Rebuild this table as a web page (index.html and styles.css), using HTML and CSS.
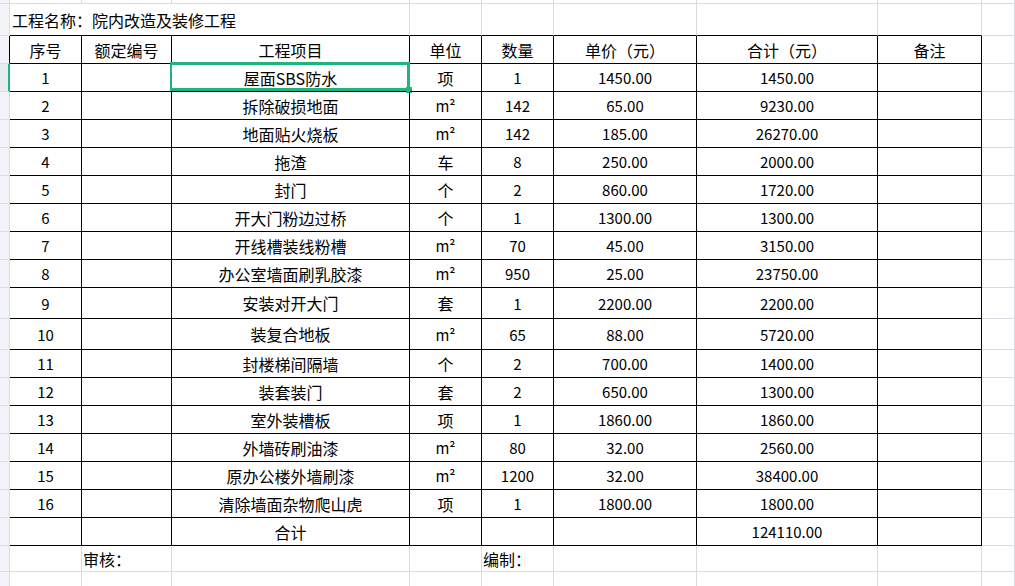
FILE: index.html
```html
<!DOCTYPE html>
<html lang="zh">
<head>
<meta charset="utf-8">
<title>院内改造及装修工程</title>
<link rel="stylesheet" href="styles.css">
</head>
<body>
<div class="sheet">
  <!-- top partial row -->
  <div class="c g"></div><div class="c"></div><div class="c"></div><div class="c"></div><div class="c"></div><div class="c"></div><div class="c"></div><div class="c"></div><div class="c"></div><div class="c"></div>

  <!-- title row -->
  <div class="c g"></div>
  <div class="c above title span3">工程名称：院内改造及装修工程</div>
  <div class="c above"></div><div class="c above"></div><div class="c above"></div><div class="c above"></div><div class="c above"></div>
  <div class="c"></div>

  <!-- header -->
  <div class="c g gh"></div>
  <div class="c t">序号</div><div class="c t">额定编号</div><div class="c t">工程项目</div><div class="c t">单位</div><div class="c t">数量</div><div class="c t">单价（元）</div><div class="c t">合计（元）</div><div class="c t">备注</div>
  <div class="c"></div>

  <div class="c g gsel"></div><div class="c t n">1</div><div class="c t"></div><div class="c t selcell">屋面SBS防水<span class="sel"><span class="handle"></span></span></div><div class="c t">项</div><div class="c t n">1</div><div class="c t n">1450.00</div><div class="c t n">1450.00</div><div class="c t"></div><div class="c"></div>
  <div class="c g"></div><div class="c t n">2</div><div class="c t"></div><div class="c t">拆除破损地面</div><div class="c t u">m²</div><div class="c t n">142</div><div class="c t n">65.00</div><div class="c t n">9230.00</div><div class="c t"></div><div class="c"></div>
  <div class="c g"></div><div class="c t n">3</div><div class="c t"></div><div class="c t">地面贴火烧板</div><div class="c t u">m²</div><div class="c t n">142</div><div class="c t n">185.00</div><div class="c t n">26270.00</div><div class="c t"></div><div class="c"></div>
  <div class="c g"></div><div class="c t n">4</div><div class="c t"></div><div class="c t">拖渣</div><div class="c t">车</div><div class="c t n">8</div><div class="c t n">250.00</div><div class="c t n">2000.00</div><div class="c t"></div><div class="c"></div>
  <div class="c g"></div><div class="c t n">5</div><div class="c t"></div><div class="c t">封门</div><div class="c t">个</div><div class="c t n">2</div><div class="c t n">860.00</div><div class="c t n">1720.00</div><div class="c t"></div><div class="c"></div>
  <div class="c g"></div><div class="c t n">6</div><div class="c t"></div><div class="c t">开大门粉边过桥</div><div class="c t">个</div><div class="c t n">1</div><div class="c t n">1300.00</div><div class="c t n">1300.00</div><div class="c t"></div><div class="c"></div>
  <div class="c g"></div><div class="c t n">7</div><div class="c t"></div><div class="c t">开线槽装线粉槽</div><div class="c t u">m²</div><div class="c t n">70</div><div class="c t n">45.00</div><div class="c t n">3150.00</div><div class="c t"></div><div class="c"></div>
  <div class="c g"></div><div class="c t n">8</div><div class="c t"></div><div class="c t">办公室墙面刷乳胶漆</div><div class="c t u">m²</div><div class="c t n">950</div><div class="c t n">25.00</div><div class="c t n">23750.00</div><div class="c t"></div><div class="c"></div>
  <div class="c g"></div><div class="c t n">9</div><div class="c t"></div><div class="c t">安装对开大门</div><div class="c t">套</div><div class="c t n">1</div><div class="c t n">2200.00</div><div class="c t n">2200.00</div><div class="c t"></div><div class="c"></div>
  <div class="c g"></div><div class="c t n">10</div><div class="c t"></div><div class="c t">装复合地板</div><div class="c t u">m²</div><div class="c t n">65</div><div class="c t n">88.00</div><div class="c t n">5720.00</div><div class="c t"></div><div class="c"></div>
  <div class="c g"></div><div class="c t n">11</div><div class="c t"></div><div class="c t">封楼梯间隔墙</div><div class="c t">个</div><div class="c t n">2</div><div class="c t n">700.00</div><div class="c t n">1400.00</div><div class="c t"></div><div class="c"></div>
  <div class="c g"></div><div class="c t n">12</div><div class="c t"></div><div class="c t">装套装门</div><div class="c t">套</div><div class="c t n">2</div><div class="c t n">650.00</div><div class="c t n">1300.00</div><div class="c t"></div><div class="c"></div>
  <div class="c g"></div><div class="c t n">13</div><div class="c t"></div><div class="c t">室外装槽板</div><div class="c t">项</div><div class="c t n">1</div><div class="c t n">1860.00</div><div class="c t n">1860.00</div><div class="c t"></div><div class="c"></div>
  <div class="c g"></div><div class="c t n">14</div><div class="c t"></div><div class="c t">外墙砖刷油漆</div><div class="c t u">m²</div><div class="c t n">80</div><div class="c t n">32.00</div><div class="c t n">2560.00</div><div class="c t"></div><div class="c"></div>
  <div class="c g"></div><div class="c t n">15</div><div class="c t"></div><div class="c t">原办公楼外墙刷漆</div><div class="c t u">m²</div><div class="c t n">1200</div><div class="c t n">32.00</div><div class="c t n">38400.00</div><div class="c t"></div><div class="c"></div>
  <div class="c g"></div><div class="c t n">16</div><div class="c t"></div><div class="c t">清除墙面杂物爬山虎</div><div class="c t">项</div><div class="c t n">1</div><div class="c t n">1800.00</div><div class="c t n">1800.00</div><div class="c t"></div><div class="c"></div>

  <!-- total -->
  <div class="c g"></div><div class="c t"></div><div class="c t"></div><div class="c t">合计</div><div class="c t"></div><div class="c t"></div><div class="c t"></div><div class="c t n">124110.00</div><div class="c t"></div><div class="c"></div>

  <!-- footer -->
  <div class="c g"></div><div class="c"></div><div class="c left">审核：</div><div class="c"></div><div class="c"></div><div class="c left">编制：</div><div class="c"></div><div class="c"></div><div class="c"></div><div class="c"></div>

  <!-- bottom partial row -->
  <div class="c g"></div><div class="c"></div><div class="c"></div><div class="c"></div><div class="c"></div><div class="c"></div><div class="c"></div><div class="c"></div><div class="c"></div><div class="c"></div>
</div>
</body>
</html>
```

FILE: styles.css
```css
html, body {
  margin: 0;
  padding: 0;
  background: #ffffff;
}

body {
  width: 1015px;
  height: 586px;
  overflow: hidden;
  font-family: "Noto Sans CJK SC", "Noto Sans", sans-serif;
  font-size: 16px;
  color: #000000;
}

.sheet {
  display: grid;
  grid-template-columns: 10px 72px 90px 238px 72px 72px 143px 181px 104px 33px;
  grid-template-rows: 4px 32px 28px repeat(8, 28px) 31px 31px repeat(7, 28px) 26px 15px;
}

.c {
  box-sizing: border-box;
  border-right: 1px solid #d6dbe4;
  border-bottom: 1px solid #d6dbe4;
  display: flex;
  align-items: center;
  justify-content: center;
  white-space: nowrap;
  line-height: 1;
  position: relative;
}

.g {
  background: #f3f4f7;
}

.gh {
  border-right-color: #000000;
}

.gsel {
  background: #e9ecf1;
  border-right: 2px solid #1fb47c;
}

.above {
  border-bottom-color: #000000;
}

.span3 {
  grid-column: span 3;
}

.title {
  justify-content: flex-start;
  padding-left: 2px;
}

.t {
  border-right-color: #000000;
  border-bottom-color: #000000;
}

.n {
  font-size: 15px;
}

.u {
  font-size: 15px;
}

.left {
  justify-content: flex-start;
  padding-left: 1px;
}

.sel {
  position: absolute;
  left: -2px;
  top: -2px;
  right: -1px;
  bottom: 0;
  border: 3px solid #1fb47c;
  border-left-width: 2px;
  border-right-width: 3px;
}

.handle {
  position: absolute;
  right: -5px;
  bottom: -5px;
  width: 6px;
  height: 6px;
  background: #1fb47c;
}
```
